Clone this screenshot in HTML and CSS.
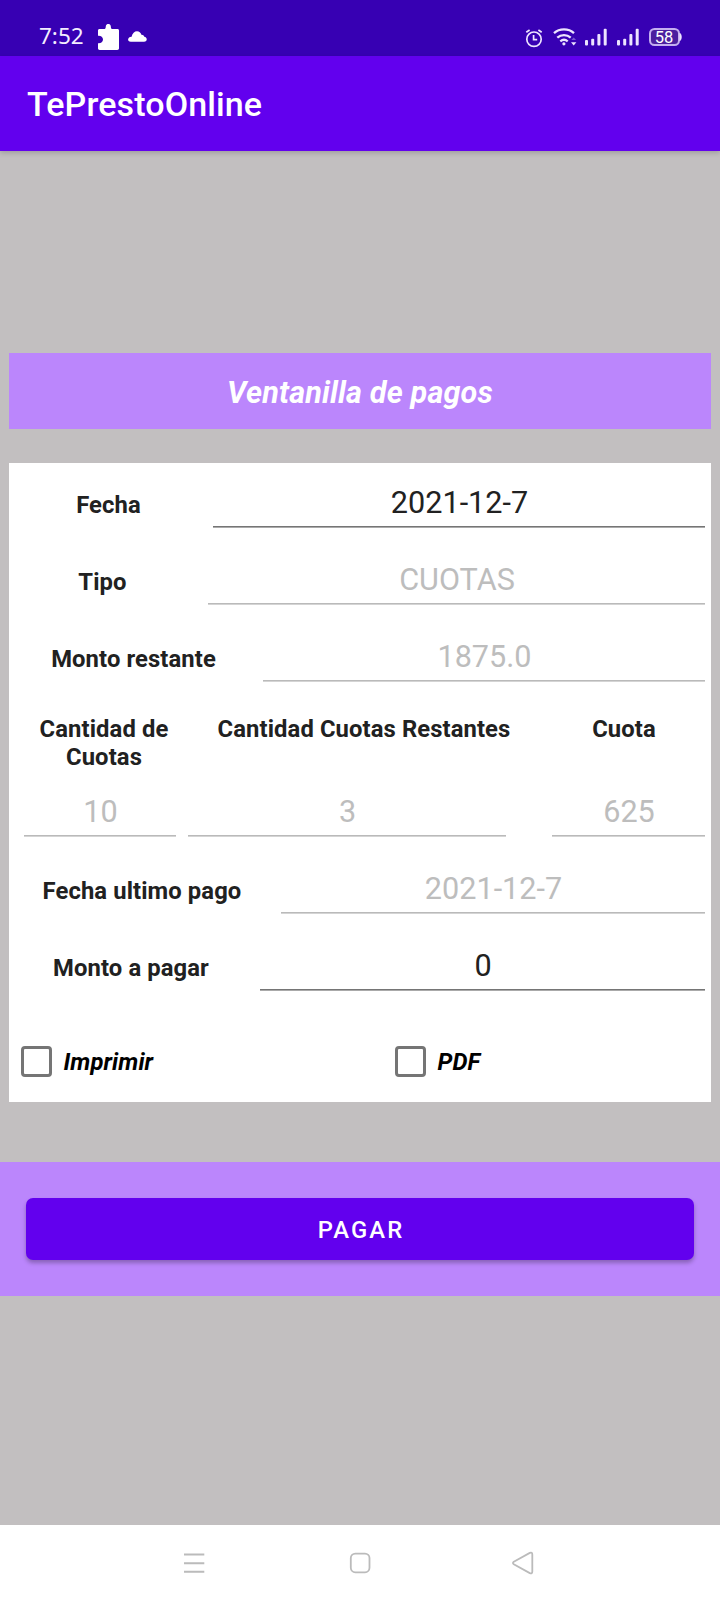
FILE: index.html
```html
<!DOCTYPE html>
<html lang="es">
<head>
<meta charset="utf-8">
<title>TePrestoOnline</title>
<link rel="stylesheet" href="styles.css">
</head>
<body>
<div class="screen">
  <header class="status">
    <span class="clock">7:52</span>
    <svg class="puzzle" viewBox="97 23 23 28" width="23" height="28"><path d="M99.5 29h5.2c1.2 0 .9-2 1.2-3.2.3-1.200 1.200-1.800 2.400-1.800s2.100.6 2.400 1.800c.3 1.200 0 3.200 1.200 3.200H117.500c.9 0 1.500.6 1.500 1.500V48.300c0 1-.7 1.700-1.700 1.700H99.700c-1 0-1.700-.7-1.700-1.700V43.200c2.700.3 5-1 5-3.700s-2.300-4-5-3.700V30.500c0-.9.6-1.500 1.500-1.500z" fill="#fff"/></svg>
    <svg class="cloud" viewBox="127 30 21 13" width="21" height="13"><path d="M130.800 41.700c-3.800 0-3.600-4.800.8-5 .6-3.500 3-5.500 5.400-5.500 2.200 0 3.700 1.400 4.400 3.500 1.600-.1 2.500.7 2.900 2.100 3.200.5 3.500 4.900-.3 4.900z" fill="#fff"/></svg>
    <div class="tray">
      <svg viewBox="525 27 18 21" width="18" height="21" fill="none" stroke="#ede4ff" stroke-width="1.700"><circle cx="534" cy="39.200" r="7.200"/><path d="M526.300 32.300l3.300-2.300M541.700 32.300l-3.300-2.300M533.600 35v4.700h3.600"/></svg>
      <svg class="wifi" viewBox="553 27 25 20" width="25" height="20" fill="none" stroke="#ede4ff" stroke-width="2.300"><path d="M554 33.200c5.500-5 14.500-5 20 0M557.300 37.600c3.800-3.400 9.600-3.400 13.400 0M560.300 41.300c2.200-1.800 5.200-1.800 7.400 0"/><circle cx="563.900" cy="43.800" r="1.600" fill="#ede4ff" stroke="none"/><path d="M571.300 40l2.400-2.600 2.400 2.600z" fill="#7852cf" stroke="none"/><path d="M571 42.200h5.400l-2.700 3.400z" fill="#ede4ff" stroke="none"/></svg>
      <svg class="signal" viewBox="584 28 24 19" width="24" height="19" fill="#ede4ff"><rect x="585" y="40" width="3" height="5.500" rx="1"/><rect x="591.200" y="38.700" width="3" height="6.800" rx="1"/><rect x="597.400" y="34" width="3" height="11.500" rx="1"/><rect x="603.700" y="28.700" width="3" height="16.800" rx="1"/></svg>
      <svg class="signal" viewBox="584 28 24 19" width="24" height="19" fill="#ede4ff"><rect x="585" y="40" width="3" height="5.500" rx="1"/><rect x="591.200" y="38.700" width="3" height="6.800" rx="1"/><rect x="597.400" y="34" width="3" height="11.500" rx="1"/><rect x="603.700" y="28.700" width="3" height="16.800" rx="1"/></svg>
      <svg class="battery" viewBox="648 27 34 20" width="34" height="20"><rect x="650" y="29" width="29" height="16" rx="4.500" fill="#4c1f9f" stroke="#c4aef0" stroke-width="2"/><path d="M680 33.500c1.600.8 1.600 6.200 0 7z" fill="#ede4ff" stroke="#ede4ff"/><text x="664" y="42.900" text-anchor="middle" class="level">58</text></svg>
    </div>
  </header>
  <div class="appbar"><h1 class="title">TePrestoOnline</h1></div>
  <main class="content">
    <h2 class="banner">Ventanilla de pagos</h2>
    <section class="card">
      <div class="row fecha"><span class="label">Fecha</span><span class="field active">2021-12-7</span></div>
      <div class="row tipo"><span class="label">Tipo</span><span class="field">CUOTAS</span></div>
      <div class="row restante"><span class="label">Monto restante</span><span class="field">1875.0</span></div>
      <div class="heads"><span>Cantidad de<br>Cuotas</span><span>Cantidad Cuotas Restantes</span><span>Cuota</span></div>
      <div class="values"><span class="field">10</span><span class="field">3</span><span class="field">625</span></div>
      <div class="row ultimo"><span class="label">Fecha ultimo pago</span><span class="field">2021-12-7</span></div>
      <div class="row pagar"><span class="label">Monto a pagar</span><span class="field active">0</span></div>
      <div class="checks">
        <label class="check"><span class="box"></span>Imprimir</label>
        <label class="check"><span class="box"></span>PDF</label>
      </div>
    </section>
    <div class="action"><button class="button" type="button">PAGAR</button></div>
  </main>
  <nav class="nav">
    <svg viewBox="183 1551 23 24" width="23" height="24" stroke="#bbb" stroke-width="2"><path d="M184 1554.600h20.300M184 1563.200h20.300M184 1571.700h20.300"/></svg>
    <svg class="home" viewBox="349 1551 22 24" width="22" height="24" fill="none" stroke="#bbb" stroke-width="1.800"><rect x="350.800" y="1553.600" width="18.700" height="18.700" rx="4.500"/></svg>
    <svg class="back" viewBox="511 1551 23 24" width="23" height="24" fill="none" stroke="#bbb" stroke-width="1.800"><path d="M513.800 1561.700L529.800 1552.900q2.500-.9 2.500 1.600V1571.500q0 2.500-2.500 1.600L513.800 1564.300q-1.700-1.300 0-2.600z"/></svg>
  </nav>
</div>
</body>
</html>
```

FILE: styles.css
```css
* { box-sizing: border-box; }
body { margin: 0; font-family: Roboto, sans-serif; background: #c2bfc0; }
h1, h2 { margin: 0; }
svg { display: block; flex: none; }
.screen { width: 720px; height: 1600px; display: flex; flex-direction: column; overflow: hidden; }

.status { flex: none; height: 56px; padding: 21px 38px 0 39px; display: flex; align-items: flex-start; background: #3700b3; color: #fff; }
.clock { width: 58px; font: 400 22.5px/30px "Noto Sans", sans-serif; color: #f3edff; }
.puzzle { margin-top: 2px; }
.cloud { margin: 9px 0 0 7px; }
.tray { margin-left: auto; padding-top: 6px; display: flex; }
.wifi { margin-left: 10px; }
.signal { margin: 1px 0 0 6px; }
.signal + .signal { margin-left: 8px; }
.battery { margin-left: 8px; }
.level { font: 400 16.500px Roboto, sans-serif; fill: #fff; }

.appbar { flex: none; height: 95px; padding: 28px 27px 0; background: #6200ee; box-shadow: 0 2px 5px rgba(0, 0, 0, .18); z-index: 1; }
.title { font-size: 34px; line-height: 40px; font-weight: 500; letter-spacing: .12px; color: #fff; }

.content { flex: 1; padding-top: 202px; }
.banner { height: 76px; margin: 0 9px 34px; padding-top: 22px; background: #bb86fc; color: #fff; font-size: 30.600px; line-height: 36px; font-weight: 700; font-style: italic; letter-spacing: .17px; text-align: center; }
.card { height: 639px; margin: 0 9px; background: #fff; font-size: 23.800px; line-height: 28px; font-weight: 700; letter-spacing: .1px; color: #212121; text-align: center; }
.row { height: 77px; display: flex; padding-right: 6px; }
.label { flex: none; padding-top: 28px; }
.fecha .label { width: 204px; padding-right: 5px; }
.tipo .label { width: 199px; padding-right: 12px; }
.restante .label { width: 254px; padding-right: 5px; }
.ultimo .label { width: 272px; padding-right: 6px; }
.pagar .label { width: 251px; padding-right: 7px; }
.field { flex: 1; height: 65px; padding: 22px 0 0 1px; font-size: 30.600px; line-height: 36px; font-weight: 400; letter-spacing: 0; color: #bdbdbd; border-bottom: 1px solid #d4d4d4; box-shadow: inset 0 -1px #bababa; }
.field.active { color: #212121; border-bottom-color: #aaa; box-shadow: inset 0 -1px #757575; }
.heads { height: 78px; padding: 21px 5px 0 15px; display: grid; grid-template-columns: 160px 360px 160px; }
.values { height: 77px; padding-left: 15px; display: grid; grid-template-columns: 152px 318px 153px; column-gap: 12px; }
.values .field:last-child { margin: 0 -34px 0 34px; }
.checks { height: 99px; padding: 43px 0 0 11.500px; display: flex; color: #000; font-style: italic; }
.check { flex: none; width: 374px; display: flex; gap: 12px; line-height: 32px; }
.check:last-child { width: auto; }
.box { flex: none; width: 31px; height: 31px; border: 3px solid #757575; border-radius: 4px; }

.action { height: 134px; margin-top: 60px; padding: 36px 26px; background: #bb86fc; }
.button { display: block; width: 100%; height: 62px; padding: 2px 0 0 2px; border: 0; border-radius: 7px; background: #6200ee; color: #fff; font: 500 23.800px/28px Roboto, sans-serif; letter-spacing: 2.130px; box-shadow: 0 3px 4px rgba(0, 0, 0, .27); }

.nav { flex: none; height: 75px; padding: 26px 186px 0 183px; display: flex; background: #fff; }
.home { margin-left: 143px; }
.back { margin-left: 140px; }
```
